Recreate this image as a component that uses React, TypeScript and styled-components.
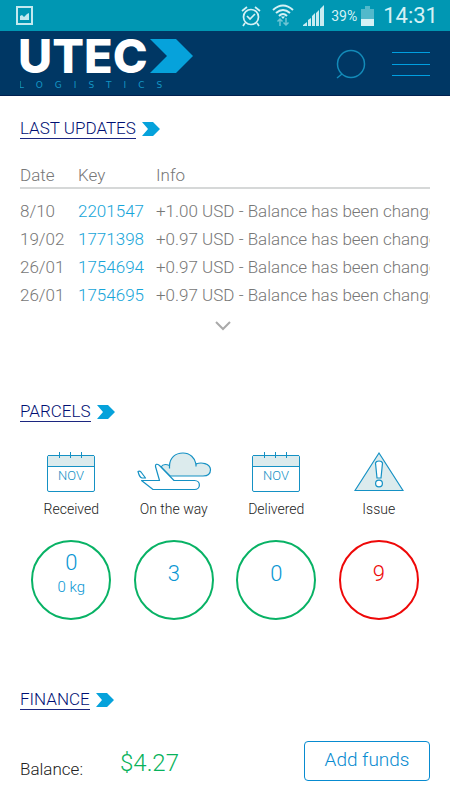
import React from 'react';
import styled, { createGlobalStyle } from 'styled-components';

const GlobalStyle = createGlobalStyle`
  * { box-sizing: border-box; }
  body {
    margin: 0;
    background: #fff;
    color: #222;
    font-family: Roboto, "Liberation Sans", sans-serif;
    font-weight: 300;
  }
`;

const StatusBar = styled.div`
  display: flex;
  align-items: center;
  height: 31px;
  padding: 0 12px 0 16px;
  background: #0097b3;
  color: #d5f1f5;
`;

const StatusIcons = styled.div`
  display: flex;
  align-items: center;
  margin-left: auto;
`;

const StatusIcon = styled.svg<{ $gap: number }>`
  display: block;
  margin-right: ${({ $gap }) => $gap}px;
`;

const BatteryLevel = styled.span`
  margin-right: 4px;
  font-size: 14px;
  font-weight: 400;
`;

const Clock = styled.time`
  font-size: 22px;
  font-weight: 400;
  line-height: 31px;
`;

const Header = styled.header`
  display: flex;
  align-items: center;
  padding: 7px 20px 6px;
  border-bottom: 1px solid #002050;
  background: #003764;
`;

const LogoLink = styled.a`
  display: block;
  margin-right: auto;
`;

const LogoMark = styled.svg`
  display: block;
`;

const IconButton = styled.button`
  display: block;
  margin-left: 26px;
  padding: 0;
  border: 0;
  background: none;
  cursor: pointer;

  svg { display: block; }
`;

const Content = styled.main`
  padding: 0 20px;
`;

const Section = styled.section<{ $top: number }>`
  padding-top: ${({ $top }) => $top}px;
`;

const Title = styled.h2`
  display: flex;
  align-items: center;
  gap: 6px;
  margin: 0;
  font-size: 17px;
  font-weight: 300;
  line-height: 20px;
`;

const TitleLink = styled.a`
  border-bottom: 1px solid #1c2680;
  color: #000f73;
  text-decoration: none;
`;

const TableClip = styled.div`
  margin-top: 24px;
  overflow: hidden;
`;

const Updates = styled.table`
  width: 100%;
  table-layout: fixed;
  border-collapse: collapse;
  color: #777;
  font-size: 17px;
  line-height: 24px;
  white-space: nowrap;
  text-align: left;
`;

const HeadCell = styled.th<{ $width?: number }>`
  width: ${({ $width }) => ($width ? `${$width}px` : 'auto')};
  padding: 0;
  border-bottom: 2px solid #d6d8d8;
  font-weight: 300;
`;

const Cell = styled.td<{ $first: boolean }>`
  padding: ${({ $first }) => ($first ? '10px 0 2px' : '2px 0')};
  overflow: hidden;
`;

const KeyLink = styled.a`
  color: #16a5d9;
  text-decoration: none;
`;

const MoreButton = styled.button`
  display: block;
  margin: 12px auto 0;
  padding: 0 5px 0 0;
  border: 0;
  background: none;
  cursor: pointer;

  svg { display: block; }
`;

const ParcelGrid = styled.div`
  display: grid;
  grid-template-columns: repeat(4, 1fr);
  margin-top: 29px;
`;

const Parcel = styled.div`
  display: flex;
  flex-direction: column;
  align-items: center;
`;

const ParcelIcon = styled.svg`
  display: block;
`;

const ParcelLabel = styled.span`
  margin: 6px 0 21px;
  font-size: 14px;
  line-height: 20px;
`;

const Counter = styled.a<{ $alert?: boolean }>`
  display: flex;
  flex-direction: column;
  align-items: center;
  justify-content: center;
  width: 80px;
  height: 80px;
  padding-bottom: 13px;
  border: 2px solid ${({ $alert }) => ($alert ? '#ee0808' : '#08b265')};
  border-radius: 50%;
  color: ${({ $alert }) => ($alert ? '#ee0808' : '#0996d3')};
  font-size: 22px;
  line-height: 26px;
  text-decoration: none;
`;

const Weight = styled.span`
  font-size: 15px;
  line-height: 22px;
`;

const FinanceRow = styled.div`
  display: flex;
  align-items: center;
  margin-top: 31px;
  padding-bottom: 20px;
`;

const BalanceLabel = styled.span`
  width: 100px;
  padding-top: 15px;
  font-size: 17px;
  line-height: 20px;
`;

const Amount = styled.span`
  padding-top: 4px;
  color: #08b25b;
  font-size: 24px;
  line-height: 28px;
`;

const AddFunds = styled.button`
  width: 126px;
  height: 40px;
  margin-left: auto;
  padding: 0 0 3px;
  border: 1px solid #088bd0;
  border-radius: 4px;
  background: #fff;
  color: #088bd0;
  font-family: inherit;
  font-size: 19px;
  font-weight: 300;
  cursor: pointer;
`;

const Chevron = () => (
  <svg width="18" height="14" viewBox="0 0 18 14" aria-hidden="true">
    <path d="M0 0H11L18 7L11 14H0L6 7Z" fill="#06a2db" />
  </svg>
);

const SectionTitle = ({ children }: { children: React.ReactNode }) => (
  <Title>
    <TitleLink href="#">{children}</TitleLink>
    <Chevron />
  </Title>
);

const CalendarIcon = () => (
  <ParcelIcon width="50" height="42" viewBox="0 0 50 42" fill="none" stroke="#1591c4" aria-hidden="true">
    <rect x="1.5" y="4.5" width="47" height="36" rx="1.5" />
    <path d="M2 5H48V15H2Z" fill="#dcebed" stroke="none" />
    <path d="M1.5 15.5H48.5M2 4.5H48M13.5 1V7M24.5 1V7M35.5 1V7" />
    <text x="25" y="29" fill="#1591c4" stroke="none" fontSize="13" textAnchor="middle">NOV</text>
  </ParcelIcon>
);

const PlaneIcon = () => (
  <ParcelIcon width="76" height="42" viewBox="0 0 76 42" fill="none" stroke="#1591c4" strokeWidth="1.2" strokeLinejoin="round" aria-hidden="true">
    <path d="M25 16C26.500 13.500 30 13 33.500 14.500C34 7 39 2 47 2C54 2 59 7 60 13C65 11 74 12 74.500 18.500C74.500 23 71 25 67 25H34Z" fill="#dcebed" />
    <path d="M33.500 14V17.500M60 12.500V15.500" />
    <path d="M5.500 29.500L17 38.500H58.500C65 38.500 65 29.500 58.500 29.500H38L23.500 14.500C21 12.500 19 13 19.500 15.500L23.500 29.500Z" fill="#fff" />
    <path d="M2 20.500Q3.500 19.500 5 21L9.500 27H6Q3.500 26.500 2 20.500Z" fill="#fff" />
  </ParcelIcon>
);

const IssueIcon = () => (
  <ParcelIcon width="50" height="42" viewBox="0 0 50 42" fill="none" stroke="#1591c4" strokeWidth="1.2" aria-hidden="true">
    <path d="M25 2L49 39.500H1Z" fill="#dcebed" />
    <path d="M21.500 12Q22 10 25 10Q28 10 28.500 12L27 27H23Z" fill="#fff" />
    <circle cx="25" cy="32.500" r="3.400" fill="#fff" />
  </ParcelIcon>
);

const updates = [
  { date: '8/10', key: '2201547', info: '+1.00 USD - Balance has been changed' },
  { date: '19/02', key: '1771398', info: '+0.97 USD - Balance has been changed' },
  { date: '26/01', key: '1754694', info: '+0.97 USD - Balance has been changed' },
  { date: '26/01', key: '1754695', info: '+0.97 USD - Balance has been changed' },
];

const parcels = [
  { label: 'Received', count: 0, weight: '0 kg', Icon: CalendarIcon },
  { label: 'On the way', count: 3, Icon: PlaneIcon },
  { label: 'Delivered', count: 0, Icon: CalendarIcon },
  { label: 'Issue', count: 9, alert: true, Icon: IssueIcon },
];

export default function App() {
  return (
    <>
      <GlobalStyle />
      <StatusBar>
        <svg width="17" height="19" viewBox="0 0 17 19" aria-hidden="true">
          <path d="M1 1H16V18H1Z" fill="none" stroke="#c3e9ef" strokeWidth="2" />
          <path d="M4 14V10L6 9L8 11L11 8L13 7V14Z" fill="#c3e9ef" />
        </svg>
        <StatusIcons>
          <StatusIcon $gap={11} width="20" height="22" viewBox="0 0 20 22" fill="none" stroke="#d5f1f5" strokeWidth="1.700" aria-hidden="true">
            <circle cx="10" cy="12" r="7.500" />
            <path d="M1 6L6 2M19 6L14 2M4 18L2 21M16 18L18 21M6 11L9 14L14 9" />
          </StatusIcon>
          <StatusIcon $gap={9} width="22" height="23" viewBox="0 0 22 23" fill="none" stroke="#d5f1f5" strokeWidth="2" aria-hidden="true">
            <path d="M1 6Q11 -3 21 6M4 9Q11 3 18 9M7 12Q11 8 15 12" />
            <path d="M9 12.500H13L11 15Z" fill="#d5f1f5" stroke="none" />
            <path d="M8 22V15M5.500 17.500L8 15L10.500 17.500M14 14V21M11.500 18.500L14 21L16.500 18.500" stroke="#70c6d5" strokeWidth="1.500" />
          </StatusIcon>
          <StatusIcon $gap={7} width="21" height="21" viewBox="0 0 21 21" fill="#c9ecf1" aria-hidden="true">
            <path d="M0 21V20L4 17V21ZM5 21V15L8 13V21ZM9 21V11L12 8V21ZM13 21V8L16 5V21ZM17 21V4L21 0V21Z" />
          </StatusIcon>
          <BatteryLevel>39%</BatteryLevel>
          <StatusIcon $gap={9} width="13" height="20" viewBox="0 0 13 20" aria-hidden="true">
            <path d="M4 0H9V3H13V20H0V3H4Z" fill="#52b9cb" />
            <path d="M0 13H13V20H0Z" fill="#d5f1f5" />
          </StatusIcon>
          <Clock>14:31</Clock>
        </StatusIcons>
      </StatusBar>

      <Header>
        <LogoLink href="#" aria-label="UTEC Logistics">
          <LogoMark width="174" height="51" viewBox="0 0 174 51">
            <text x="-2" y="35" fill="#fff" fontFamily="Inter, sans-serif" fontSize="47" fontWeight="800">UTEC</text>
            <path d="M130 1H156L173 18L156 35H130L147 18Z" fill="#06a2db" />
            <text x="-1" y="50" fill="#1495c3" fontFamily="DejaVu Sans, sans-serif" fontSize="9" fontWeight="400" letterSpacing="12">LOGISTICS</text>
          </LogoMark>
        </LogoLink>
        <IconButton type="button" aria-label="Search">
          <svg width="30" height="30" viewBox="0 0 30 30" fill="none" stroke="#138bb9" strokeWidth="1.500">
            <circle cx="15" cy="15" r="13.500" />
            <path d="M6 25L1 29" />
          </svg>
        </IconButton>
        <IconButton type="button" aria-label="Menu">
          <svg width="38" height="26" viewBox="0 0 38 26" stroke="#009fe0">
            <path d="M0 1.500H38M0 13.500H38M0 24.500H38" />
          </svg>
        </IconButton>
      </Header>

      <Content>
        <Section $top={22}>
          <SectionTitle>LAST UPDATES</SectionTitle>
          <TableClip>
            <Updates>
              <thead>
                <tr>
                  <HeadCell $width={58}>Date</HeadCell>
                  <HeadCell $width={78}>Key</HeadCell>
                  <HeadCell>Info</HeadCell>
                </tr>
              </thead>
              <tbody>
                {updates.map((row, i) => (
                  <tr key={row.key}>
                    <Cell $first={i === 0}>{row.date}</Cell>
                    <Cell $first={i === 0}><KeyLink href="#">{row.key}</KeyLink></Cell>
                    <Cell $first={i === 0}>{row.info}</Cell>
                  </tr>
                ))}
              </tbody>
            </Updates>
          </TableClip>
          <MoreButton type="button" aria-label="Show more updates">
            <svg width="16" height="10" viewBox="0 0 16 10" fill="none" stroke="#aaa" strokeWidth="2">
              <path d="M1 1L8 8L15 1" />
            </svg>
          </MoreButton>
        </Section>

        <Section $top={70}>
          <SectionTitle>PARCELS</SectionTitle>
          <ParcelGrid>
            {parcels.map(({ label, count, weight, alert, Icon }) => (
              <Parcel key={label}>
                <Icon />
                <ParcelLabel>{label}</ParcelLabel>
                <Counter href="#" $alert={alert}>
                  {count}
                  {weight && <Weight>{weight}</Weight>}
                </Counter>
              </Parcel>
            ))}
          </ParcelGrid>
        </Section>

        <Section $top={69}>
          <SectionTitle>FINANCE</SectionTitle>
          <FinanceRow>
            <BalanceLabel>Balance:</BalanceLabel>
            <Amount>$4.27</Amount>
            <AddFunds type="button">Add funds</AddFunds>
          </FinanceRow>
        </Section>
      </Content>
    </>
  );
}
